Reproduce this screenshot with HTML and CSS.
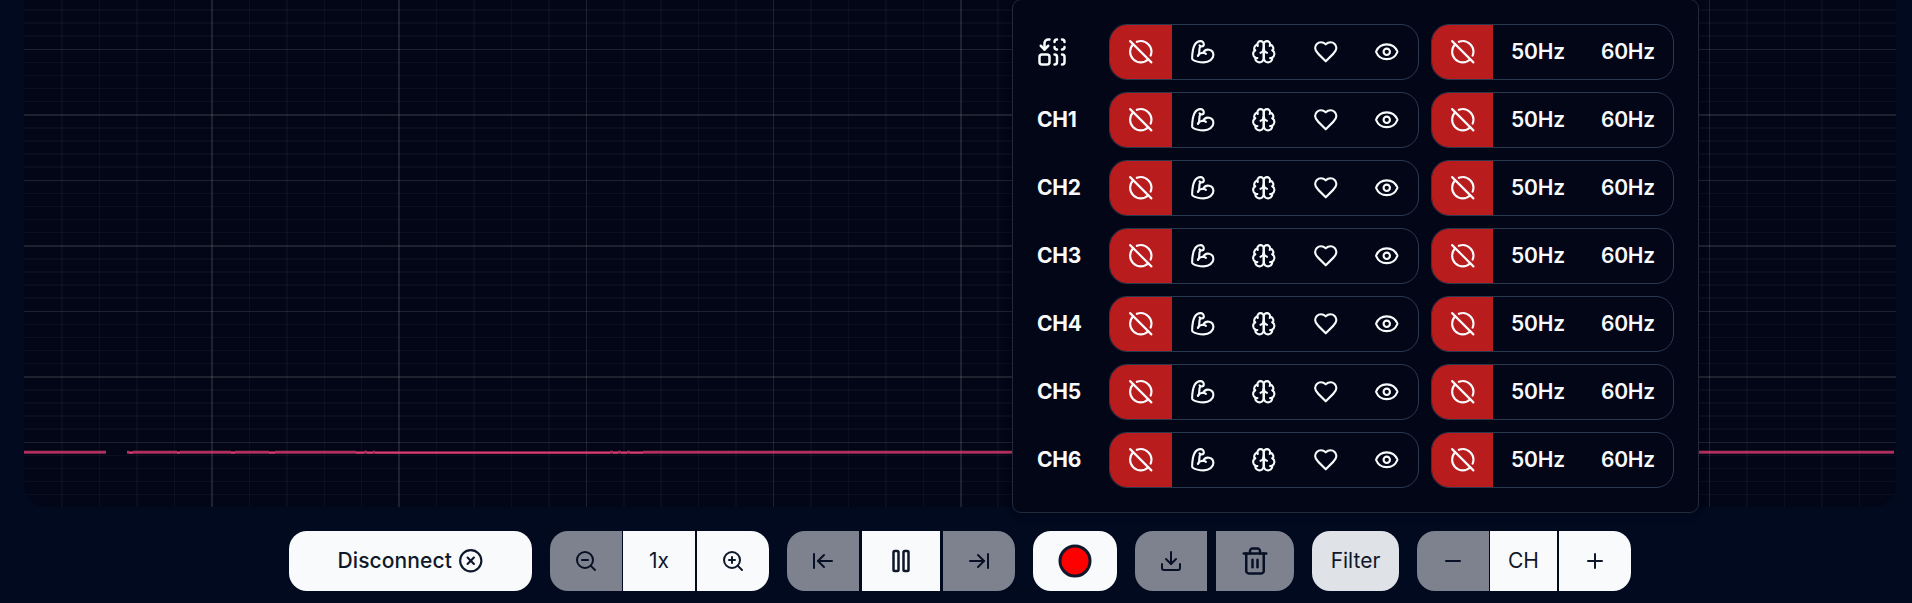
FILE: index.html
```html
<!DOCTYPE html>
<html lang="en">
<head>
<meta charset="utf-8">
<title>Chords</title>
<link rel="stylesheet" href="styles.css">
</head>
<body>
<svg class="sprite" aria-hidden="true">
  <symbol id="replace-all" viewBox="0 0 24 24"><path d="M14 14a2 2 0 0 1 2 2v4a2 2 0 0 1-2 2"/><path d="M14 4a2 2 0 0 1 2-2"/><path d="M16 10a2 2 0 0 1-2-2"/><path d="M20 14a2 2 0 0 1 2 2v4a2 2 0 0 1-2 2"/><path d="M20 2a2 2 0 0 1 2 2"/><path d="M22 8a2 2 0 0 1-2 2"/><path d="m3 7 3 3 3-3"/><path d="M6 10V5a3 3 0 0 1 3-3h1"/><rect x="2" y="14" width="8" height="8" rx="2"/></symbol>
  <symbol id="circle-off" viewBox="0 0 24 24"><path d="m2 2 20 20"/><path d="M8.35 2.69A10 10 0 0 1 21.3 15.65"/><path d="M19.08 19.08A10 10 0 1 1 4.92 4.92"/></symbol>
  <symbol id="biceps" viewBox="0 0 24 24"><path d="M12.409 13.017A5 5 0 0 1 22 15c0 3.866-4 7-9 7-4.077 0-8.153-.82-10.371-2.462-.426-.316-.631-.832-.62-1.362C2.118 12.723 2.627 2 10 2a3 3 0 0 1 3 3 2 2 0 0 1-2 2c-1.105 0-1.64-.444-2-1"/><path d="M15 14a5 5 0 0 0-7.584 2"/><path d="M9.964 6.825C8.019 7.977 9.5 13 8 15"/></symbol>
  <symbol id="brain" viewBox="0 0 24 24"><path d="M12 5a3 3 0 1 0-5.997.125 4 4 0 0 0-2.526 5.77 4 4 0 0 0 .556 6.588A4 4 0 1 0 12 18Z"/><path d="M12 5a3 3 0 1 1 5.997.125 4 4 0 0 1 2.526 5.77 4 4 0 0 1-.556 6.588A4 4 0 1 1 12 18Z"/><path d="M15 13a4.5 4.5 0 0 1-3-4 4.5 4.5 0 0 1-3 4"/><path d="M17.599 6.5a3 3 0 0 0 .399-1.375"/><path d="M6.003 5.125A3 3 0 0 0 6.401 6.5"/><path d="M3.477 10.896a4 4 0 0 1 .585-.396"/><path d="M19.938 10.5a4 4 0 0 1 .585.396"/><path d="M6 18a4 4 0 0 1-1.967-.516"/><path d="M19.967 17.484A4 4 0 0 1 18 18"/></symbol>
  <symbol id="heart" viewBox="0 0 24 24"><path d="M19 14c1.49-1.46 3-3.21 3-5.5A5.5 5.5 0 0 0 16.5 3c-1.76 0-3 .5-4.5 2-1.5-1.5-2.74-2-4.5-2A5.5 5.5 0 0 0 2 8.5c0 2.3 1.5 4.05 3 5.5l7 7Z"/></symbol>
  <symbol id="eye" viewBox="0 0 24 24"><path d="M2.062 12.348a1 1 0 0 1 0-.696 10.75 10.75 0 0 1 19.876 0 1 1 0 0 1 0 .696 10.75 10.75 0 0 1-19.876 0"/><circle cx="12" cy="12" r="3"/></symbol>
</svg>

<main class="page">
  <section class="chart">
    <svg class="plot" id="plot" width="1872" height="507" shape-rendering="crispEdges"></svg>
  </section>

  <nav class="toolbar">
    <button class="btn btn-connect">Disconnect
      <svg class="icon icon-sm" viewBox="0 0 24 24"><circle cx="12" cy="12" r="10"/><path d="m15 9-6 6"/><path d="m9 9 6 6"/></svg>
    </button>

    <div class="group">
      <button class="btn sq first off"><svg class="icon" viewBox="0 0 24 24"><circle cx="11" cy="11" r="8"/><path d="m21 21-4.35-4.35"/><path d="M8 11h6"/></svg></button>
      <button class="btn sq mid zoom-value">1x</button>
      <button class="btn sq last"><svg class="icon" viewBox="0 0 24 24"><circle cx="11" cy="11" r="8"/><path d="m21 21-4.35-4.35"/><path d="M11 8v6"/><path d="M8 11h6"/></svg></button>
    </div>

    <div class="group group-playback">
      <button class="btn sq first off"><svg class="icon" viewBox="0 0 24 24"><path d="M3 19V5"/><path d="m13 6-6 6 6 6"/><path d="M7 12h14"/></svg></button>
      <button class="btn mid wide"><svg class="icon icon-lg" viewBox="0 0 24 24"><rect x="14" y="4" width="4" height="16" rx="1"/><rect x="6" y="4" width="4" height="16" rx="1"/></svg></button>
      <button class="btn sq last off"><svg class="icon" viewBox="0 0 24 24"><path d="M17 12H3"/><path d="m11 18 6-6-6-6"/><path d="M21 5v14"/></svg></button>
    </div>

    <button class="btn btn-record"><svg class="icon icon-xl" viewBox="0 0 24 24"><circle cx="12" cy="12" r="10" fill="red"/></svg></button>

    <div class="group group-files">
      <button class="btn sq first off"><svg class="icon" viewBox="0 0 24 24"><path d="M21 15v4a2 2 0 0 1-2 2H5a2 2 0 0 1-2-2v-4"/><path d="m7 10 5 5 5-5"/><path d="M12 15V3"/></svg></button>
      <button class="btn wide last off"><svg class="icon icon-lg" viewBox="0 0 24 24"><path d="M3 6h18"/><path d="M19 6v14c0 1-1 2-2 2H7c-1 0-2-1-2-2V6"/><path d="M8 6V4c0-1 1-2 2-2h4c1 0 2 1 2 2v2"/><path d="M10 11v6"/><path d="M14 11v6"/></svg></button>
    </div>

    <button class="btn btn-filter">Filter</button>

    <div class="group">
      <button class="btn sq first off"><svg class="icon" viewBox="0 0 24 24"><path d="M5 12h14"/></svg></button>
      <button class="btn mid channel">CH</button>
      <button class="btn sq last"><svg class="icon" viewBox="0 0 24 24"><path d="M5 12h14"/><path d="M12 5v14"/></svg></button>
    </div>
  </nav>

  <div class="popover" id="filters"></div>
</main>
<script src="script.js"></script>
</body>
</html>
```
FILE: styles.css
```css
* { box-sizing: border-box; }

body {
  margin: 0;
  overflow: hidden;
  background: #020a20;
  font-family: Inter, "Liberation Sans", sans-serif;
  font-size: 21px;
  line-height: 30px;
}

.sprite { display: none; }

.page {
  position: relative;
  width: 1920px;
  height: 603px;
}

.chart {
  height: 507px;
  margin: 0 24px;
  overflow: hidden;
  border-radius: 0 0 24px 24px;
  background: #020617;
}

.plot { display: block; }
.minor { fill: #ffffff; fill-opacity: 0.035; }
.minor-2 { fill: #ffffff; fill-opacity: 0.03; }
.major { fill: #80807c; fill-opacity: 0.23; }
.sig-edge { fill: #ec3f77; fill-opacity: 0.2; }
.sig-soft { fill: #ec3f77; fill-opacity: 0.74; }
.sig-dim { fill: #ec3f77; fill-opacity: 0.5; }
.sig-full { fill: #dc3a6f; }

.toolbar {
  display: flex;
  justify-content: center;
  gap: 18px;
  padding: 24px 0 12px;
}

.group { display: flex; gap: 1px; }
.group .mid + .last { margin-left: 1px; }
.group-playback { gap: 3px; }
.group-playback .mid + .last { margin-left: 0; }
.group-files { gap: 9px; }

.btn {
  display: flex;
  align-items: center;
  justify-content: center;
  height: 60px;
  padding: 0;
  border: 0;
  border-radius: 18px;
  background: #f8fafc;
  color: #0f172a;
  font: inherit;
}

.btn.first { border-radius: 18px 0 0 18px; }
.btn.mid { border-radius: 0; }
.btn.last { border-radius: 0 18px 18px 0; }
.sq { width: 72px; }
.wide { width: 78px; }
.off { opacity: 0.5; }
.channel { width: 67px; }
.btn-connect { width: 243px; gap: 6px; font-weight: 500; letter-spacing: 0.1px; }
.btn-record { width: 84px; }
.btn-filter { width: 87px; background: #dfe2e7; }

.icon {
  flex: none;
  width: 24px;
  height: 24px;
  fill: none;
  stroke: currentColor;
  stroke-width: 2;
  stroke-linecap: round;
  stroke-linejoin: round;
}
.icon-sm { width: 25.5px; height: 25.5px; }
.icon-lg { width: 30px; height: 30px; }
.icon-xl { width: 36px; height: 36px; }

.popover {
  position: absolute;
  left: 1012px;
  top: -1px;
  display: flex;
  flex-direction: column;
  gap: 12px;
  width: 687px;
  padding: 24px;
  border: 1px solid #232b3a;
  border-radius: 9px;
  background: #020617;
  color: #f8fafc;
  box-shadow: 0 6px 9px -1px rgba(0, 0, 0, 0.1), 0 3px 6px -2px rgba(0, 0, 0, 0.1);
}

.row { display: flex; align-items: center; height: 56px; }
.row-label { display: flex; width: 72px; font-weight: 700; letter-spacing: -0.2px; }
.choices {
  display: flex;
  height: 56px;
  overflow: hidden;
  border: 1px solid #2b3950;
  border-radius: 18px;
}
.signals { width: 310px; }
.notch { width: 243px; margin-left: 12px; }
.choice {
  display: flex;
  flex: 1;
  align-items: center;
  justify-content: center;
  padding: 0;
  border: 0;
  background: transparent;
  color: inherit;
  font: inherit;
  font-weight: 600;
  letter-spacing: -0.2px;
}
.choice.active { background: #b91c1c; }
.notch .choice.active { flex: 0 0 61px; }
```
FILE: script.js
```javascript
const NS = "http://www.w3.org/2000/svg";
const plot = document.getElementById("plot");

function bar(cls, x, y, w, h) {
  const r = document.createElementNS(NS, "rect");
  r.setAttribute("class", cls);
  r.setAttribute("x", x);
  r.setAttribute("y", y);
  r.setAttribute("width", w);
  r.setAttribute("height", h);
  plot.appendChild(r);
}

// Vertical grid: 50 divisions, every fifth one is major.
for (let k = 1; k < 50; k++) {
  const p = k * 37.44;
  const wide = p % 1 < 0.5;
  const x = Math.round(p);
  bar(k % 5 === 0 ? "major" : wide ? "minor-2" : "minor", x, 0, wide ? 2 : 1, 507);
}

// Horizontal grid: 131px blocks holding two major lines each.
for (let base = -17; base < 507; base += 131) {
  bar("major", 0, base, 1872, 2);
  bar("major", 0, base + 66, 1872, 1);
  for (let i = 1; i <= 4; i++) {
    bar("minor-2", 0, base + 13 * i, 1872, 2);
    bar("minor", 0, base + 66 + 13 * i, 1872, 1);
  }
}

// Signal trace: segments [start, end, level].
const trace = [
  [0, 82, 0], [103, 105, 0], [105, 109, 1], [109, 153, 0], [153, 156, 1],
  [156, 207, 0], [207, 211, 1], [211, 245, 0], [245, 251, 1], [251, 332, 0],
  [332, 340, 1], [340, 343, 0], [343, 349, 1], [349, 351, 0], [351, 586, 1],
  [586, 589, 0], [589, 594, 1], [594, 597, 0], [597, 603, 1], [603, 606, 0],
  [606, 619, 1], [619, 1870, 0]
];
for (const [a, b, level] of trace) {
  const w = b - a;
  if (level) {
    bar("sig-dim", a, 451, w, 1);
    bar("sig-full", a, 452, w, 1);
    bar("sig-soft", a, 453, w, 1);
  } else {
    bar("sig-edge", a, 450, w, 1);
    bar("sig-soft", a, 451, w, 2);
    bar("sig-dim", a, 453, w, 1);
  }
}

// Filter popover rows.
const icon = (name, size = "icon-sm") => `<svg class="icon ${size}"><use href="#${name}"/></svg>`;
const labels = [icon("replace-all", "icon-lg"), "CH1", "CH2", "CH3", "CH4", "CH5", "CH6"];
document.getElementById("filters").innerHTML = labels.map(label => `
  <div class="row">
    <div class="row-label">${label}</div>
    <div class="choices signals">
      <button class="choice active">${icon("circle-off")}</button>
      ${["biceps", "brain", "heart", "eye"].map(n => `<button class="choice">${icon(n)}</button>`).join("")}
    </div>
    <div class="choices notch">
      <button class="choice active">${icon("circle-off")}</button>
      <button class="choice">50Hz</button>
      <button class="choice">60Hz</button>
    </div>
  </div>`).join("");
```
